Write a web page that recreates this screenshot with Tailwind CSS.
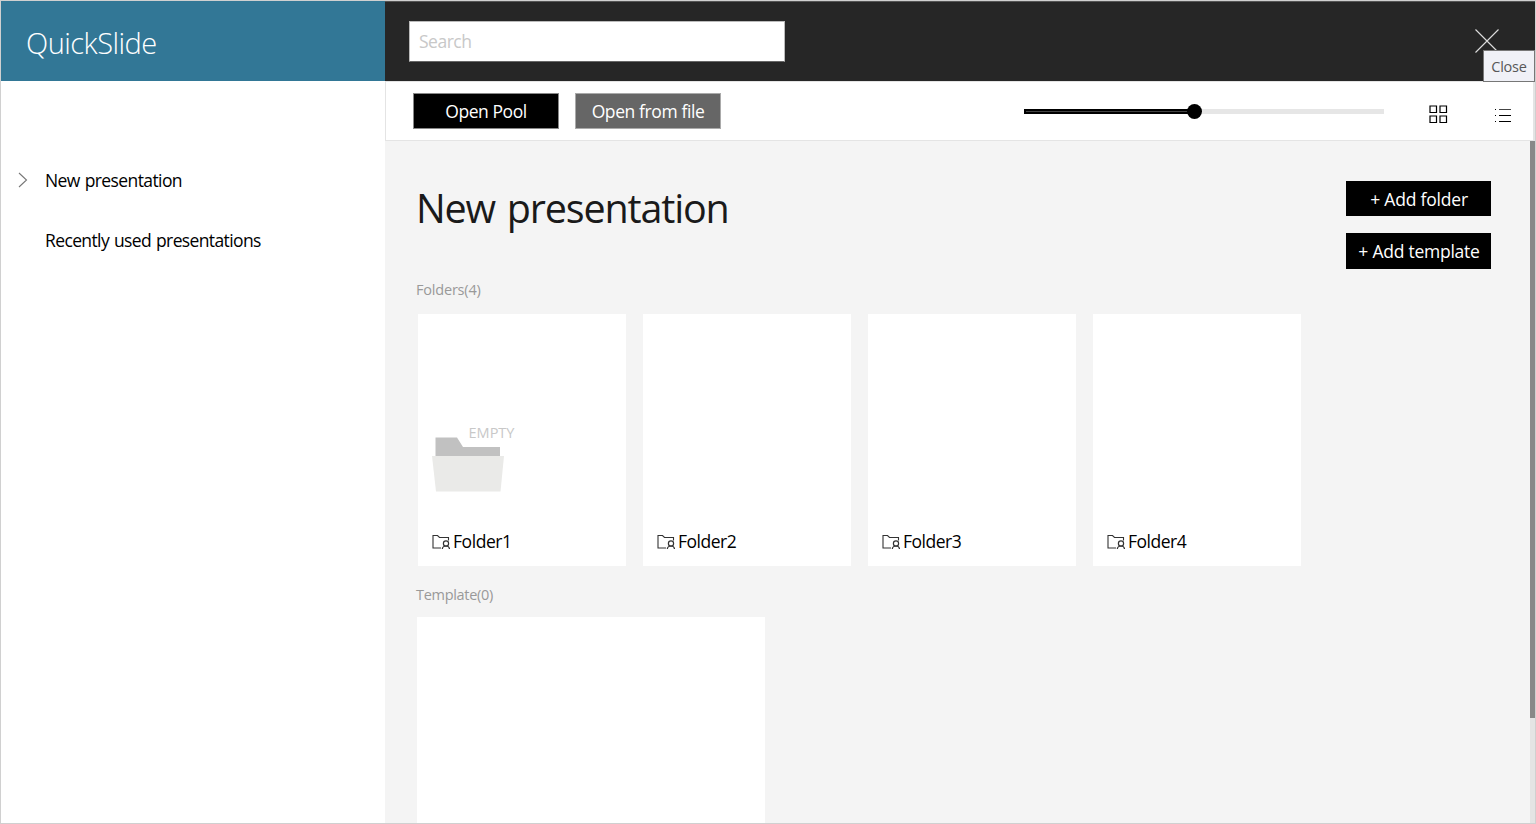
<!DOCTYPE html>
<html lang="en">
<head>
<meta charset="utf-8">
<title>QuickSlide</title>
<script src="https://cdn.jsdelivr.net/npm/@tailwindcss/browser@4"></script>
</head>
<body class="h-[824px] w-[1536px] overflow-hidden bg-white font-['Open_Sans','Noto_Sans',sans-serif] text-black">
<svg class="hidden">
  <symbol id="folder-user" viewBox="0 0 18 16">
    <path d="M9 14H1V1.500h4.500l2 2H16.500V6.500" fill="none" stroke="#333" stroke-width="1.1"/>
    <circle cx="14" cy="9.500" r="2.600" fill="none" stroke="#333" stroke-width="1.2"/>
    <path d="M10.300 15c.2-2 1.600-3 3.700-3s3.300 1 3.500 3" fill="none" stroke="#333" stroke-width="1.2"/>
  </symbol>
</svg>
<div class="relative flex h-[824px] w-[1536px] border border-[#d0d0d0]">
  <aside class="w-[384px] shrink-0 bg-white">
    <div class="flex h-20 items-center bg-[#327796] pl-[25px] text-white"><span class="mt-[3px] text-[29px] leading-none font-light tracking-[-0.5px] whitespace-nowrap">QuickSlide</span></div>
    <nav class="pt-[69px] text-[17.5px]">
      <div class="flex h-[60px] items-center">
        <svg class="ml-[17px] h-4 w-[10px]" viewBox="0 0 10 16" fill="none" stroke="#777" stroke-width="1.1"><path d="M1 1l7.500 7L1 15"/></svg>
        <span class="ml-[17px] tracking-[-0.6px] [word-spacing:1px] whitespace-nowrap">New presentation</span>
      </div>
      <div class="flex h-[60px] items-center pl-11"><span class="tracking-[-0.62px] [word-spacing:1px] whitespace-nowrap">Recently used presentations</span></div>
    </nav>
  </aside>
  <main class="flex min-w-0 flex-1 flex-col bg-[#f4f4f4]">
    <header class="flex h-20 shrink-0 items-center justify-between border-t border-[#555] bg-[#262626] pr-[36px] pb-px pl-6">
      <div class="flex h-[41px] w-[376px] items-center border border-[#bbb] border-b-[#666] bg-white pl-[9px]"><span class="text-[17.5px] tracking-[-0.5px] text-[#c8c8c8]">Search</span></div>
      <svg class="h-6 w-6" viewBox="0 0 24 24" stroke="#ddd" stroke-width="1.1"><path d="M.5.5l23 23M23.500.5l-23 23"/></svg>
    </header>
    <div class="flex h-[60px] shrink-0 items-center border border-r-2 border-[#e4e4e4] bg-white text-[17.5px] text-white">
      <div class="ml-[27px] flex h-9 w-[146px] items-center justify-center border border-[#888] bg-black"><span class="tracking-[-0.45px] whitespace-nowrap">Open Pool</span></div>
      <div class="ml-[16px] flex h-9 w-[146px] items-center justify-center border border-[#aaa] bg-[#666]"><span class="tracking-[-0.4px] whitespace-nowrap">Open from file</span></div>
      <div class="ml-[303px] flex w-[360px] items-center">
        <div class="h-[5px] w-[167px] border-2 border-black bg-[#444]"></div>
        <div class="-ml-1 size-[15px] rounded-full bg-black"></div>
        <div class="h-[5px] flex-1 bg-[#e6e6e6]"></div>
      </div>
      <svg class="mt-[6px] ml-[45px] size-[19px]" viewBox="0 0 19 19" fill="none" stroke="#000" stroke-width="1.200"><path d="M1 1h6.500v6.500H1zM11 1h6.500v6.500H11zM1 11h6.500v6.500H1zM11 11h6.500v6.500H11z"/></svg>
      <svg class="mt-[8px] ml-[46px] h-[15px] w-[18px]" viewBox="0 0 18 15" fill="#000"><path d="M5 7h12v1H5zM5 13h12v1H5zM1 1h1v1H1zM1 7h1v1H1zM1 13h1v1H1z"/><path d="M5 1h12v1H5z" fill="#444"/></svg>
    </div>
    <div class="flex min-h-0 flex-1 overflow-hidden">
      <section class="w-[944px] shrink-0 pl-[31px]">
        <h1 class="mt-[40px] h-[54px] text-[39.500px] leading-[54px] whitespace-nowrap text-[#1a1a1a]"><span class="tracking-[-1.15px] [word-spacing:2.5px]">New presentation</span></h1>
        <h2 class="mt-[45px] h-5 text-[14.500px] leading-5 whitespace-nowrap text-[#999]"><span class="tracking-[-0.2px]">Folders(4)</span></h2>
        <div class="mt-[14px] ml-[2px] flex gap-[17px]">
          <div class="flex h-[252px] w-[208px] flex-col justify-end bg-white pl-[14px]">
            <svg class="h-[74px] w-[100px]" viewBox="0 -6 100 74">
              <path d="M3.500 31V12.500H25L31 22h37v9z" fill="#c1c1c1"/>
              <path d="M0 31h72l-3.500 35.500H4z" fill="#eaeae8"/>
              <text x="36.500" y="13" font-size="14" fill="#c8c8c8" textLength="46" lengthAdjust="spacingAndGlyphs">EMPTY</text>
            </svg>
            <div class="mt-[29px] flex h-[44px] items-center gap-[3px] pb-[5px]"><svg class="h-4 w-[18px]"><use href="#folder-user"/></svg><span class="text-[17.5px] tracking-[-0.45px]">Folder1</span></div>
          </div>
          <div class="flex h-[252px] w-[208px] flex-col justify-end bg-white pl-[14px]">
            <div class="flex h-[44px] items-center gap-[3px] pb-[5px]"><svg class="h-4 w-[18px]"><use href="#folder-user"/></svg><span class="text-[17.5px] tracking-[-0.5px]">Folder2</span></div>
          </div>
          <div class="flex h-[252px] w-[208px] flex-col justify-end bg-white pl-[14px]">
            <div class="flex h-[44px] items-center gap-[3px] pb-[5px]"><svg class="h-4 w-[18px]"><use href="#folder-user"/></svg><span class="text-[17.5px] tracking-[-0.5px]">Folder3</span></div>
          </div>
          <div class="flex h-[252px] w-[208px] flex-col justify-end bg-white pl-[14px]">
            <div class="flex h-[44px] items-center gap-[3px] pb-[5px]"><svg class="h-4 w-[18px]"><use href="#folder-user"/></svg><span class="text-[17.5px] tracking-[-0.5px]">Folder4</span></div>
          </div>
        </div>
        <h2 class="mt-[19px] h-5 text-[14.500px] leading-5 whitespace-nowrap text-[#999]"><span class="tracking-[-0.3px]">Template(0)</span></h2>
        <div class="mt-[12px] ml-px h-[230px] w-[348px] bg-white"></div>
      </section>
      <section class="flex flex-1 flex-col items-end gap-[17px] pt-10 pr-[39px] text-[17.5px] text-white">
        <div class="flex h-[35px] w-[145px] items-center justify-center bg-black pt-[2px] pl-px"><span class="tracking-[-0.2px] whitespace-nowrap">+ Add folder</span></div>
        <div class="flex h-[36px] w-[145px] items-center justify-center bg-black pt-px pl-px"><span class="tracking-[-0.25px] whitespace-nowrap">+ Add template</span></div>
      </section>
      <div class="w-[5px] bg-[#e4e4e4]"><div class="h-[577px] bg-[#888]"></div></div>
    </div>
  </main>
  <div class="absolute top-[49px] left-[1482px] flex h-[32px] w-[52px] items-center justify-center border border-[#777] bg-[#f0f1f7] pt-px text-[14.500px] text-[#575757]"><span class="tracking-[-0.2px]">Close</span></div>
</div>
</body>
</html>
